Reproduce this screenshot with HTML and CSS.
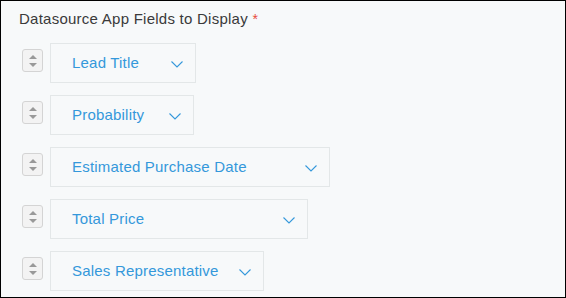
FILE: index.html
```html
<!DOCTYPE html>
<html lang="en">
<head>
  <meta charset="UTF-8" />
  <meta name="viewport" content="width=device-width, initial-scale=1.0" />
  <title>Datasource App Fields</title>
  <link rel="stylesheet" href="styles.css">
</head>
<body>
  <div class="panel">
    <div class="label">Datasource App Fields to Display <span class="required">*</span></div>

    <div class="field-list">
      <div class="field-row">
        <div class="handle"><span class="up"></span><span class="down"></span></div>
        <div class="select" style="width: 146px">
          <span class="select-text">Lead Title</span>
          <svg class="chevron" width="12" height="7" viewBox="0 0 12 7"><path d="M0.5 0.5 L6 6 L11.5 0.5" /></svg>
        </div>
      </div>
      <div class="field-row">
        <div class="handle"><span class="up"></span><span class="down"></span></div>
        <div class="select" style="width: 144px">
          <span class="select-text">Probability</span>
          <svg class="chevron" width="12" height="7" viewBox="0 0 12 7"><path d="M0.5 0.5 L6 6 L11.5 0.5" /></svg>
        </div>
      </div>
      <div class="field-row">
        <div class="handle"><span class="up"></span><span class="down"></span></div>
        <div class="select" style="width: 280px">
          <span class="select-text">Estimated Purchase Date</span>
          <svg class="chevron" width="12" height="7" viewBox="0 0 12 7"><path d="M0.5 0.5 L6 6 L11.5 0.5" /></svg>
        </div>
      </div>
      <div class="field-row">
        <div class="handle"><span class="up"></span><span class="down"></span></div>
        <div class="select" style="width: 258px">
          <span class="select-text">Total Price</span>
          <svg class="chevron" width="12" height="7" viewBox="0 0 12 7"><path d="M0.5 0.5 L6 6 L11.5 0.5" /></svg>
        </div>
      </div>
      <div class="field-row">
        <div class="handle"><span class="up"></span><span class="down"></span></div>
        <div class="select" style="width: 214px">
          <span class="select-text">Sales Representative</span>
          <svg class="chevron" width="12" height="7" viewBox="0 0 12 7"><path d="M0.5 0.5 L6 6 L11.5 0.5" /></svg>
        </div>
      </div>
    </div>
  </div>
</body>
</html>
```

FILE: styles.css
```css
html, body {
  margin: 0;
  padding: 0;
}
body {
  font-family: "Liberation Sans", Arial, sans-serif;
  font-size: 15px;
}
.panel {
  box-sizing: border-box;
  width: 566px;
  height: 298px;
  border: 1px solid #000;
  background-color: #f7f9fa;
  padding: 8px 0 0 18px;
  overflow: hidden;
}
.label {
  color: #3a3a3a;
  line-height: 20px;
  margin-bottom: 14px;
  letter-spacing: 0.25px;
}
.required {
  color: #e74c3c;
  font-size: 14px;
}
.field-list {
  display: flex;
  flex-direction: column;
  gap: 12px;
  padding-left: 3px;
}
.field-row {
  display: flex;
  align-items: flex-start;
  gap: 7px;
}
/* drag handle with up/down arrows */
.handle {
  box-sizing: border-box;
  width: 21px;
  height: 23px;
  margin-top: 6px;
  border: 1px solid #d4d4d4;
  border-radius: 3px;
  background-color: #f3f3f3;
  display: flex;
  flex-direction: column;
  align-items: center;
  justify-content: center;
  gap: 4px;
}
.up, .down {
  width: 0;
  height: 0;
  border-left: 4px solid transparent;
  border-right: 4px solid transparent;
}
.up {
  border-bottom: 4px solid #999;
}
.down {
  border-top: 4px solid #999;
}
.select {
  box-sizing: border-box;
  height: 40px;
  border: 1px solid #e3e7e8;
  background-color: #f7f9fa;
  padding: 0 12px 0 21px;
  display: flex;
  align-items: center;
}
.select-text {
  color: #3498db;
  line-height: 20px;
  letter-spacing: 0.2px;
}
.chevron {
  margin-left: auto;
  margin-top: 3px;
  fill: none;
  stroke: #3498db;
  stroke-width: 1.1;
}
```
